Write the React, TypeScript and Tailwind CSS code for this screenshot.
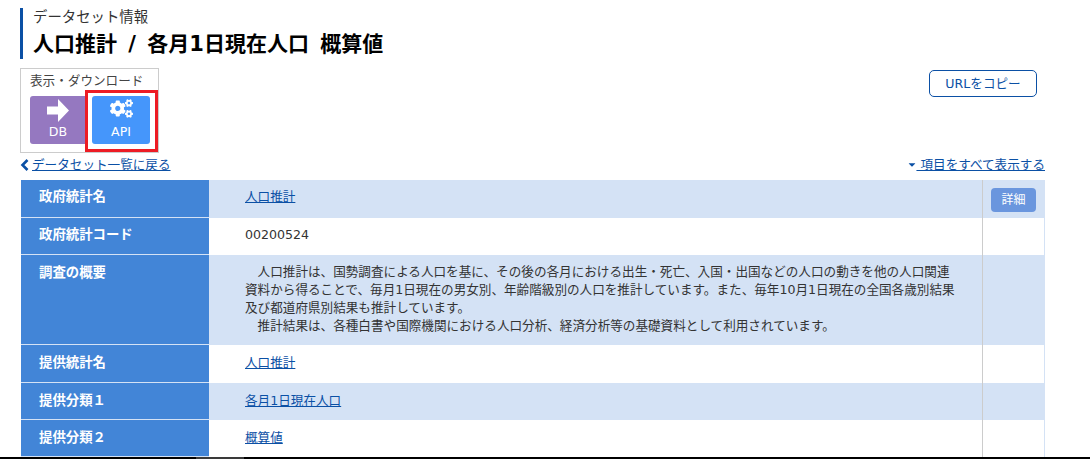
import React from "react";
import { FaCogs, FaCaretDown } from "react-icons/fa";

const font = "font-['DejaVu_Sans','Noto_Sans_CJK_JP',sans-serif]";

const rows = [
  { label: "政府統計名", value: "人口推計", link: true, h: "h-[38px]", pt: "pt-[7px]", tint: true, detail: true },
  { label: "政府統計コード", value: "00200524", link: false, h: "h-[37px]", pt: "pt-[7px]", tint: false },
  { label: "調査の概要", link: false, h: "h-[90px]", pt: "pt-[8px]", tint: true, summary: true },
  { label: "提供統計名", value: "人口推計", link: true, h: "h-[38px]", pt: "pt-[8px]", tint: false },
  { label: "提供分類１", value: "各月1日現在人口", link: true, h: "h-[37px]", pt: "pt-[8px]", tint: true },
  { label: "提供分類２", value: "概算値", link: true, h: "h-[37px]", pt: "pt-[8px]", tint: false },
];

const App = () => {
  return (
    <div className={`${font} relative w-[1090px] h-[459px] overflow-hidden bg-white text-[#333] flex flex-col`}>
      <div className="pl-5 pr-[45px] pt-2 flex-1 min-h-0">
        {/* Title */}
        <div className="border-l-[3px] border-[#0b50a5] pl-[10px] h-[51px]">
          <p className="text-[14.4px] leading-[18px] text-[#333]">データセット情報</p>
          <h1 className="mt-[3px] text-[21px] leading-[30px] font-bold text-black [word-spacing:4px]">人口推計 / 各月1日現在人口 概算値</h1>
        </div>

        {/* Download box */}
        <div className="flex items-start justify-between mt-[9px] h-[85px]">
          <div className="w-[139px] h-[85px] border border-[#ccc] pl-[9px] pt-[3px]">
            <p className="text-[12.6px] leading-[18px] whitespace-nowrap text-[#444]">表示・ダウンロード</p>
            <div className="flex mt-[6px]">
              <div className="w-[56px] h-[48px] bg-[#9578c0] rounded-l-[3px] flex flex-col items-center text-white">
                <svg viewBox="0 0 22 23" className="w-[22px] h-[23px] mt-[3px] fill-white">
                  <polygon points="0,7.5 11,7.5 11,0 22,11.5 11,23 11,15.5 0,15.5" />
                </svg>
                <span className="text-[12.6px] leading-[16px] mt-[2px]">DB</span>
              </div>
              <div className="-ml-[1px] -mt-[6px] w-[73px] h-[62px] border-[3px] border-[#ed1c24] bg-white pl-[4px] pt-[3px] shrink-0">
                <div className="w-[58px] h-[48px] bg-[#4596fb] rounded-[3px] flex flex-col items-center text-white">
                  <FaCogs className="w-[23px] h-[19px] mt-[3px]" />
                  <span className="text-[12.6px] leading-[16px] mt-[6px]">API</span>
                </div>
              </div>
            </div>
          </div>
          <button className="mt-[2px] mr-2 w-[108px] h-[27px] border border-[#0b50a5] rounded-[5px] text-[12.6px] leading-[24px] text-[#0b50a5] bg-white">
            URLをコピー
          </button>
        </div>

        {/* Links */}
        <div className="flex justify-between items-center h-[27px] pb-[3px] text-[12.6px] text-[#0b50a5]">
          <a className="flex items-center">
            <svg viewBox="0 0 9 12" className="w-[9px] h-[12px] fill-none stroke-[#0b50a5] stroke-[2.6]">
              <polyline points="7.5,1 2.5,6 7.5,11" />
            </svg>
            <span className="underline ml-[3px]">データセット一覧に戻る</span>
          </a>
          <a className="flex items-center">
            <FaCaretDown className="w-[10px] h-[11px] -mr-[1px]" />
            <span className="underline whitespace-pre"> 項目をすべて表示する</span>
          </a>
        </div>

        {/* Table */}
        <div className="flex flex-col ml-[1px]">
          {rows.map((row) => (
            <div key={row.label} className={`flex ${row.h} ${row.tint ? "bg-[#d4e2f5]" : "bg-white"}`}>
              <div className={`w-[188px] shrink-0 bg-[#4285d7] border-b border-[#d4e2f5] pl-[18px] ${row.pt} text-[13.4px] leading-[20px] font-bold text-white`}>
                {row.label}
              </div>
              <div className={`flex-1 min-w-0 pl-9 ${row.pt} text-[12.6px] leading-[20px] text-[#333]`}>
                {row.summary ? (
                  <div className="w-[715px] leading-[18px]">
                    <p>　人口推計は、国勢調査による人口を基に、その後の各月における出生・死亡、入国・出国などの人口の動きを他の人口関連資料から得ることで、毎月1日現在の男女別、年齢階級別の人口を推計しています。また、毎年10月1日現在の全国各歳別結果及び都道府県別結果も推計しています。</p>
                    <p>　推計結果は、各種白書や国際機関における人口分析、経済分析等の基礎資料として利用されています。</p>
                  </div>
                ) : row.link ? (
                  <a className="text-[#0b50a5] underline">{row.value}</a>
                ) : (
                  row.value
                )}
              </div>
              <div className={`w-[63px] shrink-0 border-l border-[#ccc] pl-2 pt-[7px] ${row.tint ? "" : "border-r border-r-[#d4e2f5]"}`}>
                {row.detail && (
                  <button className="w-[45px] h-[24px] rounded-[4px] bg-[#6a96de] text-white text-[12px] leading-[24px]">詳細</button>
                )}
              </div>
            </div>
          ))}
        </div>
      </div>
      <div className="h-[2px] bg-black shrink-0 flex">
        <div className="ml-[196px] w-[48px] bg-[#3a3a3a]" />
      </div>
    </div>
  );
};

export default App;
